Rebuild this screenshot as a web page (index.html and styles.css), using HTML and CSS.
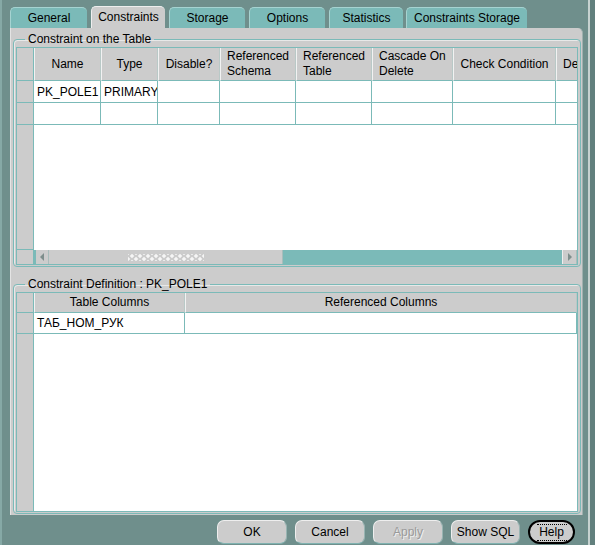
FILE: index.html
```html
<!DOCTYPE html>
<html lang="en">
  <head>
    <meta charset="UTF-8" />
    <title>Table Constraints</title>
    <link rel="stylesheet" href="styles.css">
  </head>
  <body>
    <div class="window">
      <div class="main">
        <div class="tabs">
          <div class="tab tab-general">General</div>
          <div class="tab active">Constraints</div>
          <div class="tab tab-storage">Storage</div>
          <div class="tab tab-options">Options</div>
          <div class="tab tab-stats">Statistics</div>
          <div class="tab tab-cstorage">Constraints Storage</div>
        </div>

        <div class="panel">
          <fieldset class="group">
            <legend>Constraint on the Table</legend>
            <div class="grid grid-top">
              <div class="rowheads">
                <div class="corner tall"></div>
                <div class="rh"></div>
                <div class="rh"></div>
              </div>
              <div class="cells">
                <table class="sheet sheet-top">
                  <thead>
                    <tr>
                      <th class="c-name">Name</th>
                      <th class="c-type">Type</th>
                      <th class="c-dis">Disable?</th>
                      <th class="c-rs left">Referenced<br>Schema</th>
                      <th class="c-rt left">Referenced<br>Table</th>
                      <th class="c-cd left">Cascade On<br>Delete</th>
                      <th class="c-cc">Check Condition</th>
                      <th class="c-de left">Deferrable</th>
                    </tr>
                  </thead>
                  <tbody>
                    <tr>
                      <td>PK_POLE1</td>
                      <td>PRIMARY</td>
                      <td></td><td></td><td></td><td></td><td></td><td></td>
                    </tr>
                    <tr>
                      <td></td><td></td><td></td><td></td><td></td><td></td><td></td><td></td>
                    </tr>
                  </tbody>
                </table>
              </div>
              <div class="sb-corner"></div>
              <div class="scrollbar">
                <div class="arrow arrow-left"></div>
                <div class="thumb"><span class="grip"></span></div>
                <div class="track"></div>
                <div class="arrow arrow-right"></div>
              </div>
            </div>
          </fieldset>

          <fieldset class="group group-def">
            <legend>Constraint Definition : PK_POLE1</legend>
            <div class="grid grid-bottom">
              <div class="rowheads">
                <div class="corner"></div>
                <div class="rh"></div>
              </div>
              <div class="cells">
                <table class="sheet sheet-bottom">
                  <thead>
                    <tr>
                      <th class="c-tc">Table Columns</th>
                      <th class="c-rc">Referenced Columns</th>
                    </tr>
                  </thead>
                  <tbody>
                    <tr>
                      <td>ТАБ_НОМ_РУК</td>
                      <td></td>
                    </tr>
                  </tbody>
                </table>
              </div>
            </div>
          </fieldset>
        </div>

        <div class="actions">
          <button class="btn">OK</button>
          <button class="btn">Cancel</button>
          <button class="btn disabled">Apply</button>
          <button class="btn btn-sql">Show SQL</button>
          <button class="btn btn-help"><span>Help</span></button>
        </div>
      </div>
      <div class="edge-right"></div>
    </div>
  </body>
</html>
```

FILE: styles.css
```css
* {
  box-sizing: border-box;
}

body {
  margin: 0;
  height: 545px;
  overflow: hidden;
  background-color: #6f8f8c;
  font-family: "Liberation Sans", Arial, sans-serif;
  font-size: 12px;
  color: #000;
}

.window {
  display: flex;
  height: 545px;
}

.main {
  width: 588px;
  border-left: 2px solid #86a9a6;
  padding-left: 8px;
  padding-top: 6px;
}

.edge-right {
  width: 7px;
  border-left: 2px solid #c6d2d0;
  background-color: #62807d;
}

/* tabs */
.tabs {
  display: flex;
  align-items: flex-end;
  height: 22px;
  gap: 4px;
}

.tab {
  height: 21px;
  min-width: 74px;
  padding: 0 4px;
  line-height: 20px;
  white-space: nowrap;
  text-align: center;
  background-color: #7bbab8;
  border-top: 1px solid #a6d3d1;
  border-left: 1px solid #a6d3d1;
  border-radius: 5px 5px 0 0;
}

.tab-general {
  width: 77px;
}

.tab-storage,
.tab-options {
  width: 76px;
}

.tab-cstorage {
  margin-left: -1px;
  width: 121px;
}

.tab.active {
  height: 22px;
  width: 74px;
  background-color: #cccccc;
  border-color: #eeeeee;
}

/* main panel */
.panel {
  width: 573px;
  height: 487px;
  background-color: #cccccc;
  border-left: 1px solid #e4e4e4;
  border-right: 1px solid #9fb1af;
  border-top-right-radius: 5px;
  padding: 4px 1px 0 2px;
}

.group {
  margin: 0;
  padding: 1px 2px 1px 2px;
  border: 1px solid #7bbab8;
  border-radius: 4px;
  box-shadow: inset 1px 1px 0 #e8e8e8;
}

.group legend {
  margin-left: 9px;
  padding: 0 3px;
  line-height: 14px;
}

.group-def {
  margin-top: 10px;
}

/* grids */
.grid {
  display: grid;
  grid-template-columns: 17px 1fr;
  border: 1px solid #7bbab8;
  background-color: #fff;
}

.grid-top {
  height: 218px;
  grid-template-rows: 1fr 15px;
}

.grid-bottom {
  height: 220px;
}

.rowheads {
  background-color: #cccccc;
  border-right: 1px solid #7bbab8;
}

.corner {
  height: 20px;
  border-bottom: 1px solid #7bbab8;
}

.corner.tall {
  height: 33px;
}

.rh {
  height: 22px;
  border-bottom: 1px solid #7bbab8;
}

.grid-bottom .rh {
  height: 21px;
}

.cells {
  overflow: hidden;
}

.sheet {
  table-layout: fixed;
  border-collapse: separate;
  border-spacing: 0;
}

.sheet th,
.sheet td {
  padding: 0 3px;
  white-space: nowrap;
  overflow: hidden;
  font-weight: normal;
}

.sheet th {
  background-color: #cccccc;
  border-left: 1px solid #f2f2f2;
  border-right: 1px solid #b9c9c7;
  border-bottom: 1px solid #7bbab8;
  text-align: center;
  line-height: 15px;
}

.sheet th.left {
  text-align: left;
  padding-left: 6px;
}

.sheet td {
  height: 22px;
  border-right: 1px solid #7bbab8;
  border-bottom: 1px solid #7bbab8;
}

.sheet-top {
  width: 602px;
}

.sheet-top th {
  height: 33px;
}

.c-name { width: 67px; }
.c-type { width: 57px; }
.c-dis { width: 62px; }
.c-rs { width: 76px; }
.c-rt { width: 76px; }
.c-cd { width: 81px; }
.c-cc { width: 103px; }
.c-de { width: 80px; }

.sheet-bottom {
  width: 543px;
}

.sheet-bottom th {
  height: 20px;
}

.sheet-bottom td {
  height: 21px;
}

.c-tc { width: 151px; }
.c-rc { width: 392px; }

/* horizontal scrollbar */
.sb-corner {
  background-color: #cccccc;
  border-right: 1px solid #7bbab8;
  border-top: 1px solid #7bbab8;
}

.scrollbar {
  display: flex;
  border-top: 1px solid #fff;
  background-color: #7bbab8;
}

.arrow {
  width: 15px;
  background-color: #cccccc;
  display: flex;
  align-items: center;
  justify-content: center;
}

.arrow-left {
  border-left: 2px solid #7bbab8;
  border-right: 1px solid #a9bdbb;
}

.arrow-left::before {
  content: "";
  border-right: 4px solid #7e8e8c;
  border-top: 4px solid transparent;
  border-bottom: 4px solid transparent;
}

.arrow-right {
  margin-left: auto;
  border-left: 1px solid #eeeeee;
  border-right: 1px solid #a9bdbb;
}

.arrow-right::before {
  content: "";
  border-left: 4px solid #7e8e8c;
  border-top: 4px solid transparent;
  border-bottom: 4px solid transparent;
}

.thumb {
  width: 234px;
  background-color: #cccccc;
  border-right: 1px solid #a9bdbb;
  display: flex;
  align-items: center;
  justify-content: center;
}

.grip {
  width: 76px;
  height: 7px;
  background-image:
    radial-gradient(circle, #f6f6f6 30%, transparent 36%),
    radial-gradient(circle, #f6f6f6 30%, transparent 36%);
  background-size: 8px 6px, 8px 6px;
  background-position: 0 -1px, 4px 2px;
}

/* buttons */
.actions {
  display: flex;
  justify-content: flex-end;
  gap: 8px;
  margin-top: 5px;
  padding-right: 13px;
}

.btn {
  width: 70px;
  height: 24px;
  padding: 0;
  font-family: "Liberation Sans", Arial, sans-serif;
  font-size: 12px;
  color: #000;
  background-color: #cccccc;
  border: 1px solid;
  border-color: #eeeeee #98b4b2 #7fb2b0 #eeeeee;
  border-radius: 7px;
}

.btn.disabled {
  color: #9a9a9a;
  text-shadow: 1px 1px 0 #f0f0f0;
}

.btn-sql {
  width: 69px;
}

.btn-help {
  width: 47px;
  border: 2px solid #000;
  border-radius: 12px;
  display: flex;
  align-items: center;
  justify-content: center;
}

.btn-help span {
  display: block;
  width: 30px;
  line-height: 15px;
  border-top: 1px dotted #000;
  border-bottom: 1px dotted #000;
}
```
